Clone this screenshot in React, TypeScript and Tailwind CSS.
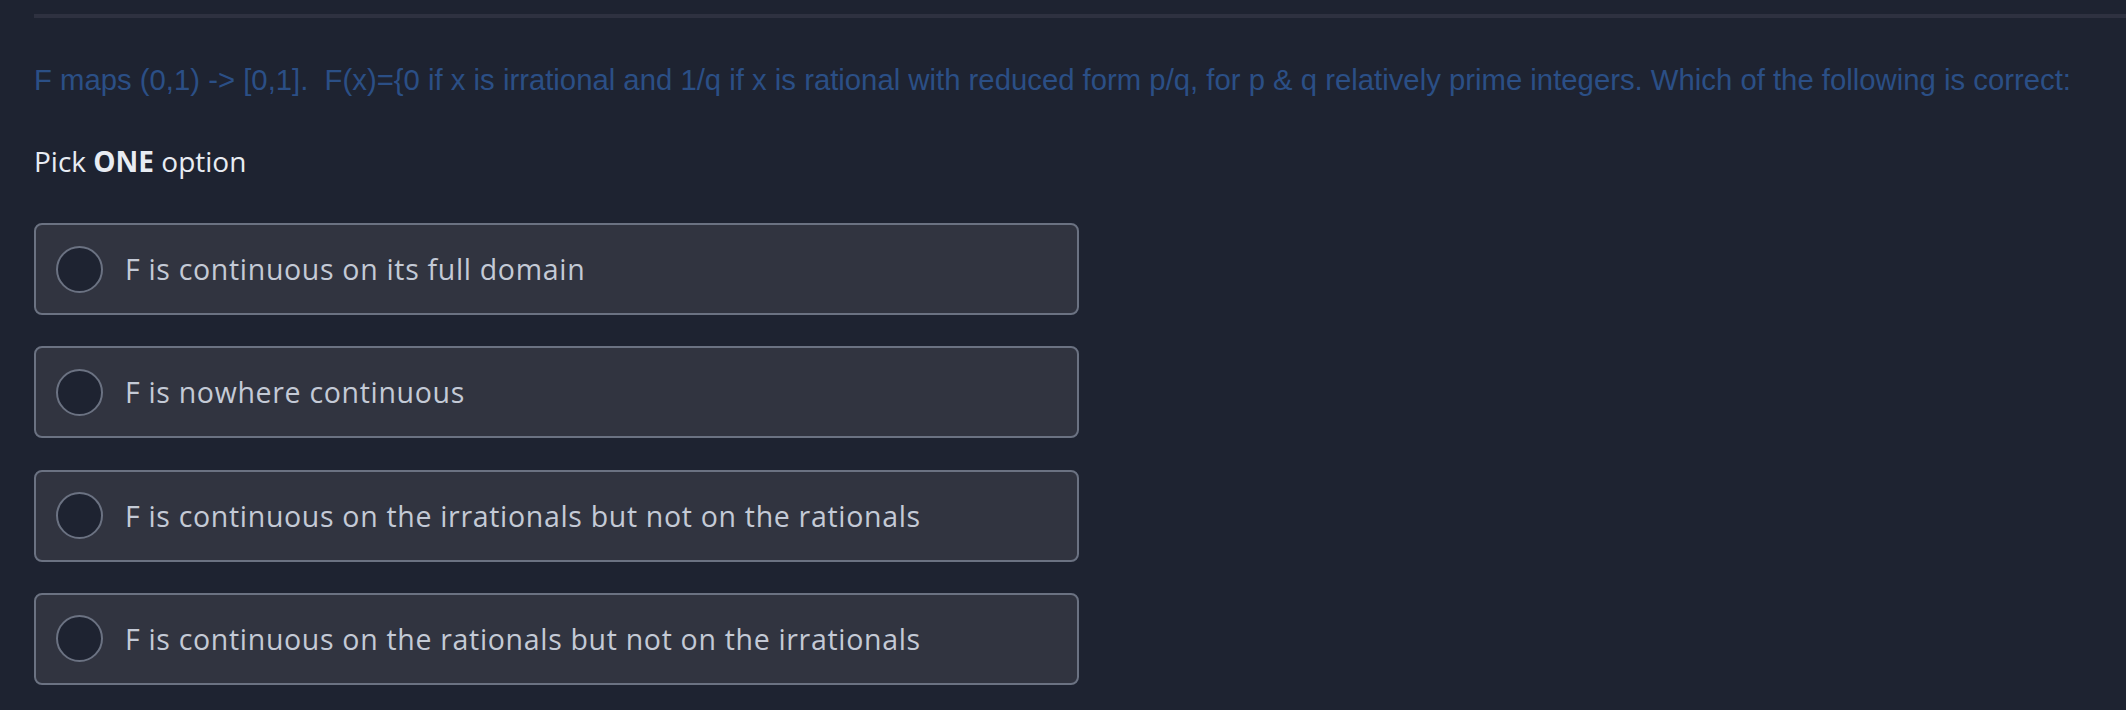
import React from "react";

const options = [
  "F is continuous on its full domain",
  "F is nowhere continuous",
  "F is continuous on the irrationals but not on the rationals",
  "F is continuous on the rationals but not on the irrationals",
];

export default function App() {
  return (
    <div className="min-h-screen bg-[#1e2331] pl-[34px] pt-[14px]">
      <div className="h-[4px] bg-[#2e3140]" />
      <p
        className="mt-[45px] text-[29.3px] leading-[34px] text-[#2b4f86] whitespace-pre"
        style={{ fontFamily: '"Liberation Sans", Arial, sans-serif' }}
      >
        {"F maps (0,1) -> [0,1].  F(x)={0 if x is irrational and 1/q if x is rational with reduced form p/q, for p & q relatively prime integers. Which of the following is correct:"}
      </p>
      <p
        className="mt-[45px] text-[28px] leading-[38px] text-[#e8ecf3]"
        style={{ fontFamily: '"Open Sans", "Noto Sans", sans-serif' }}
      >
        Pick <span className="font-bold">ONE</span> option
      </p>
      <div
        className="mt-[43px] flex w-[1045px] flex-col gap-[31.3px]"
        style={{ fontFamily: '"Open Sans", "Noto Sans", sans-serif' }}
      >
        {options.map((o) => (
          <div
            key={o}
            className="flex h-[92px] items-center rounded-[8px] border-2 border-[#6b7282] bg-[#313440] pl-[20px]"
          >
            <div className="h-[47px] w-[47px] shrink-0 rounded-full border-2 border-[#6b7282] bg-[#1e2331]" />
            <span className="ml-[22px] text-[28.5px] leading-[38px] tracking-[0.68px] text-[#c4cad6]">{o}</span>
          </div>
        ))}
      </div>
    </div>
  );
}
